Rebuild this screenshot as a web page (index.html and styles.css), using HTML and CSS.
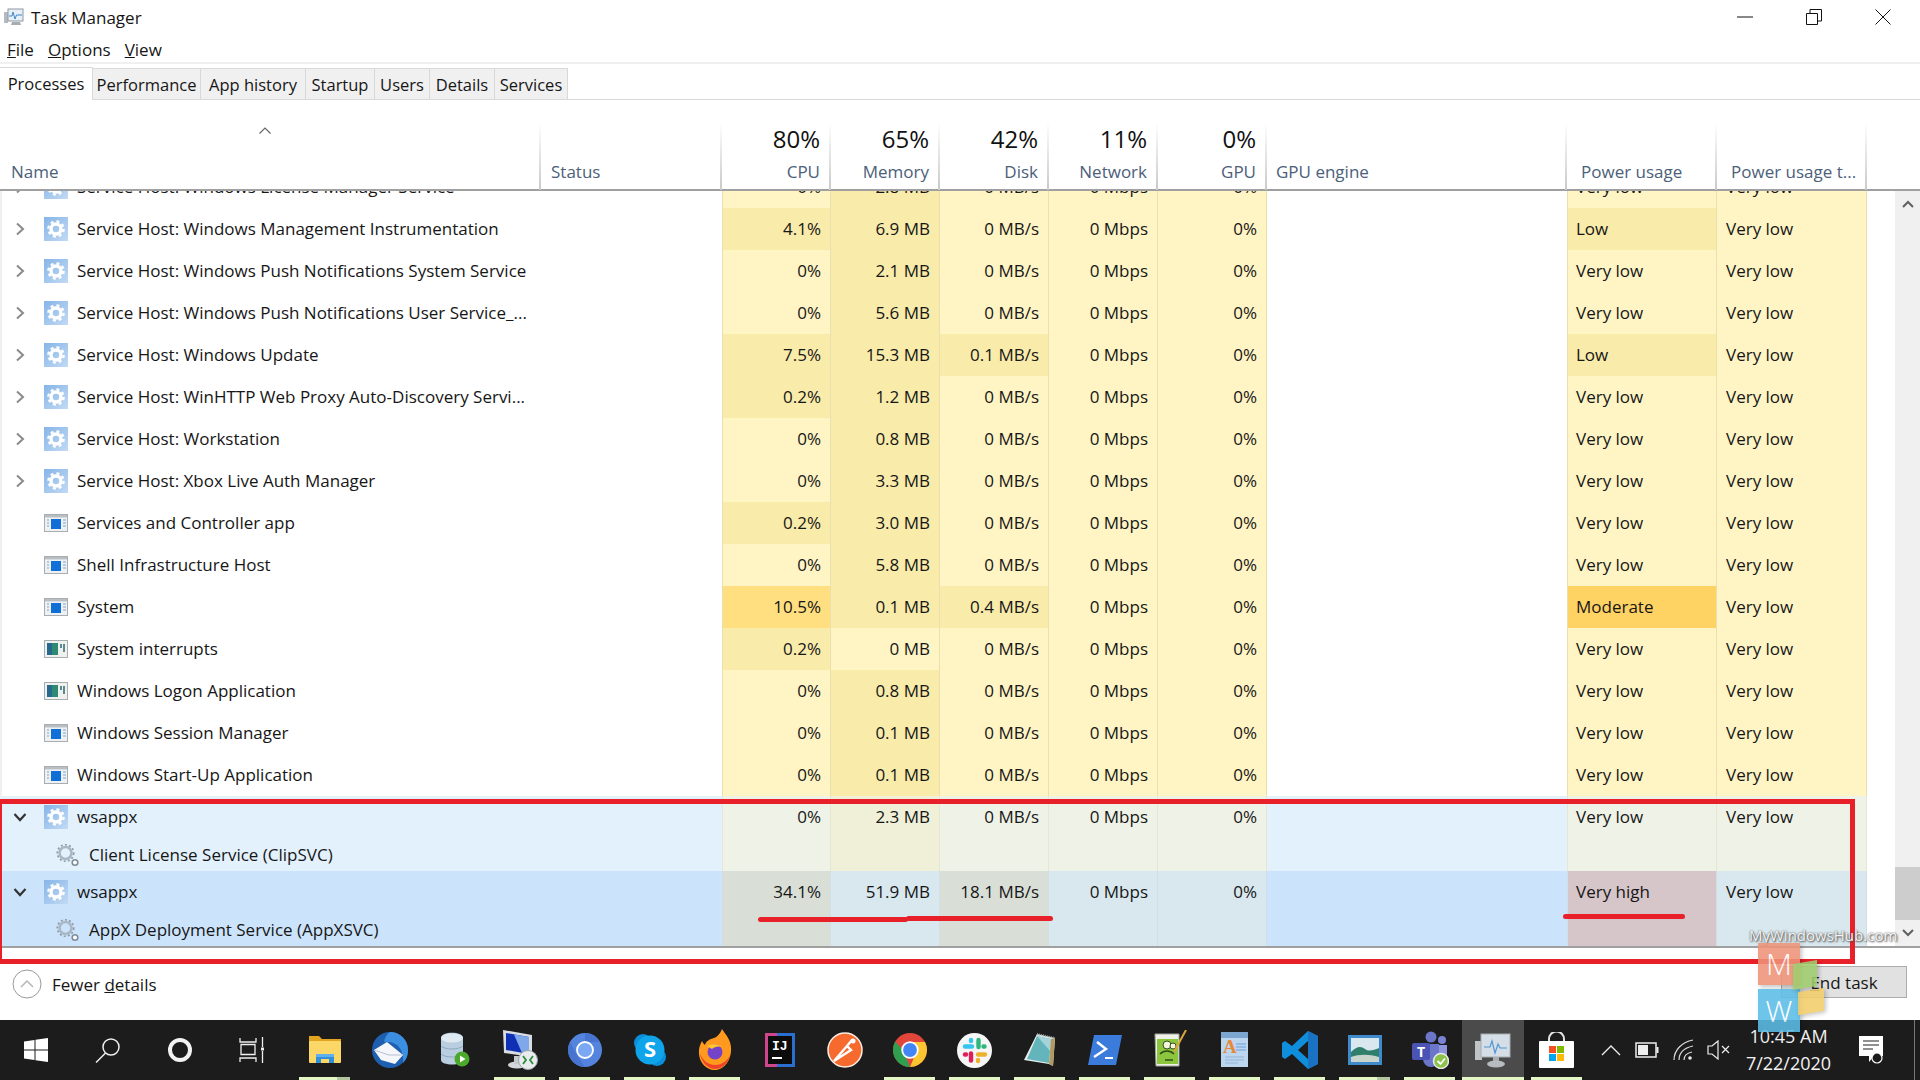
FILE: index.html
```html
<!DOCTYPE html>
<html lang="en">
<head>
    <meta charset="UTF-8">
    <meta name="viewport" content="width=device-width, initial-scale=1.0">
    <title>Task Manager</title>
    <link rel="stylesheet" href="styles.css">
</head>
<body>
    <svg class="defs" width="0" height="0">
        <defs>
            <linearGradient id="gearBg" x1="0" y1="0" x2="1" y2="1">
                <stop offset="0" stop-color="#86b5e8"/>
                <stop offset="1" stop-color="#c2daf4"/>
            </linearGradient>
            <symbol id="gear" viewBox="0 0 24 24">
                <rect width="24" height="24" fill="url(#gearBg)"/>
                <circle cx="12" cy="12" r="5" fill="none" stroke="#fff" stroke-width="3.4"/>
                <circle cx="12" cy="12" r="7.6" fill="none" stroke="#fff" stroke-width="2.4" stroke-dasharray="3 3"/>
            </symbol>
            <symbol id="gears" viewBox="0 0 24 24">
                <circle cx="9.5" cy="10" r="6" fill="none" stroke="#a9b8c4" stroke-width="2.6"/>
                <circle cx="9.5" cy="10" r="8.2" fill="none" stroke="#8d9aa6" stroke-width="1.6" stroke-dasharray="2 2.2"/>
                <circle cx="19" cy="19.5" r="2.8" fill="#fff" stroke="#7f8c98" stroke-width="1.6"/>
            </symbol>
            <symbol id="app" viewBox="0 0 24 18">
                <rect x=".5" y=".5" width="23" height="17" fill="#eef0f2" stroke="#a8adb2"/>
                <rect x="1" y="1" width="22" height="2.4" fill="#b9bec3"/>
                <rect x="7" y="5" width="10" height="10" fill="#0f6fd6"/>
                <path d="M3 6h2M3 9h2M3 12h2M19 6h3M19 9h3M19 12h3" stroke="#7fa6cc" stroke-width="1"/>
            </symbol>
            <symbol id="appg" viewBox="0 0 24 18">
                <rect x=".5" y=".5" width="23" height="17" fill="#eef1ee" stroke="#a8adb2"/>
                <rect x="3" y="3" width="11" height="12" fill="#2f8a73"/>
                <rect x="3" y="3" width="5" height="12" fill="#27688f"/>
                <path d="M17 4v4M20 4v8" stroke="#3a6f7a" stroke-width="1.6"/>
            </symbol>
            <symbol id="chevr" viewBox="0 0 10 14">
                <path d="M2 1.5 8 7l-6 5.500" fill="none" stroke="#8a8a8a" stroke-width="2"/>
            </symbol>
            <symbol id="chevd" viewBox="0 0 14 10">
                <path d="M1.500 2 7 8l5.500-6" fill="none" stroke="#333" stroke-width="2.200"/>
            </symbol>
        </defs>
    </svg>

    <div class="titlebar">
        <svg class="title-icon" width="20" height="20" viewBox="0 0 20 20">
            <rect x="0" y="5" width="4" height="11" fill="#b5bac0"/>
            <rect x="4" y="2" width="15" height="12" fill="#e6eef6" stroke="#8f979f"/>
            <path d="M5 9h3l1-4 2 7 1.500-4H18" fill="none" stroke="#3f86c9" stroke-width="1"/>
            <path d="M8 15h8l1 3H7z" fill="#a6acb2"/>
        </svg>
        <span class="title-text">Task Manager</span>
        <div class="win-controls">
            <svg class="ctl-min" width="16" height="16" viewBox="0 0 16 16"><path d="M0 8h16" stroke="#111" stroke-width="1"/></svg>
            <svg class="ctl-max" width="16" height="16" viewBox="0 0 16 16"><path d="M.5 4.500h11v11H.5zM4 4.500V.5h11.500V12H11.500" fill="none" stroke="#111"/></svg>
            <svg class="ctl-close" width="16" height="16" viewBox="0 0 16 16"><path d="M.5.5l15 15M15.500.5l-15 15" stroke="#111"/></svg>
        </div>
    </div>

    <div class="menubar">
        <span><u>F</u>ile</span>
        <span><u>O</u>ptions</span>
        <span><u>V</u>iew</span>
    </div>

    <div class="tabs">
        <div class="tab active">Processes</div>
        <div class="tab t-perf">Performance</div>
        <div class="tab t-hist">App history</div>
        <div class="tab t-start">Startup</div>
        <div class="tab t-users">Users</div>
        <div class="tab t-det">Details</div>
        <div class="tab t-serv">Services</div>
    </div>

    <div class="table-head">
        <div class="hcell h-name">
            <svg class="sort-caret" width="12" height="7" viewBox="0 0 12 7"><path d="M.5 6.500 6 1l5.500 5.500" fill="none" stroke="#666" stroke-width="1.200"/></svg>
            <span class="hlabel">Name</span>
        </div>
        <div class="hcell h-left"><span class="hlabel">Status</span></div>
        <div class="hcell h-num"><span class="hpct">80%</span><span class="hlabel">CPU</span></div>
        <div class="hcell h-num"><span class="hpct">65%</span><span class="hlabel">Memory</span></div>
        <div class="hcell h-num"><span class="hpct">42%</span><span class="hlabel">Disk</span></div>
        <div class="hcell h-num"><span class="hpct">11%</span><span class="hlabel">Network</span></div>
        <div class="hcell h-num"><span class="hpct">0%</span><span class="hlabel">GPU</span></div>
        <div class="hcell h-left h-engine"><span class="hlabel">GPU engine</span></div>
        <div class="hcell h-left h-power"><span class="hlabel">Power usage</span></div>
        <div class="hcell h-left h-power"><span class="hlabel">Power usage t...</span></div>
    </div>

    <div class="list">
        <div class="rows">
            <div class="row">
                <div class="name"><svg class="chev"><use href="#chevr"/></svg><svg class="icon"><use href="#gear"/></svg><span>Service Host: Windows License Manager Service</span></div>
                <div></div>
                <div class="c first">0%</div><div class="c m1">2.8 MB</div><div class="c">0 MB/s</div><div class="c">0 Mbps</div><div class="c">0%</div>
                <div></div>
                <div class="c p first">Very low</div><div class="c p">Very low</div>
            </div>
            <div class="row">
                <div class="name"><svg class="chev"><use href="#chevr"/></svg><svg class="icon"><use href="#gear"/></svg><span>Service Host: Windows Management Instrumentation</span></div>
                <div></div>
                <div class="c first m1">4.1%</div><div class="c m1">6.9 MB</div><div class="c">0 MB/s</div><div class="c">0 Mbps</div><div class="c">0%</div>
                <div></div>
                <div class="c p first m1">Low</div><div class="c p">Very low</div>
            </div>
            <div class="row">
                <div class="name"><svg class="chev"><use href="#chevr"/></svg><svg class="icon"><use href="#gear"/></svg><span>Service Host: Windows Push Notifications System Service</span></div>
                <div></div>
                <div class="c first">0%</div><div class="c m1">2.1 MB</div><div class="c">0 MB/s</div><div class="c">0 Mbps</div><div class="c">0%</div>
                <div></div>
                <div class="c p first">Very low</div><div class="c p">Very low</div>
            </div>
            <div class="row">
                <div class="name"><svg class="chev"><use href="#chevr"/></svg><svg class="icon"><use href="#gear"/></svg><span>Service Host: Windows Push Notifications User Service_...</span></div>
                <div></div>
                <div class="c first">0%</div><div class="c m1">5.6 MB</div><div class="c">0 MB/s</div><div class="c">0 Mbps</div><div class="c">0%</div>
                <div></div>
                <div class="c p first">Very low</div><div class="c p">Very low</div>
            </div>
            <div class="row">
                <div class="name"><svg class="chev"><use href="#chevr"/></svg><svg class="icon"><use href="#gear"/></svg><span>Service Host: Windows Update</span></div>
                <div></div>
                <div class="c first m1">7.5%</div><div class="c m1">15.3 MB</div><div class="c m1">0.1 MB/s</div><div class="c">0 Mbps</div><div class="c">0%</div>
                <div></div>
                <div class="c p first m1">Low</div><div class="c p">Very low</div>
            </div>
            <div class="row">
                <div class="name"><svg class="chev"><use href="#chevr"/></svg><svg class="icon"><use href="#gear"/></svg><span>Service Host: WinHTTP Web Proxy Auto-Discovery Servi...</span></div>
                <div></div>
                <div class="c first m1">0.2%</div><div class="c m1">1.2 MB</div><div class="c">0 MB/s</div><div class="c">0 Mbps</div><div class="c">0%</div>
                <div></div>
                <div class="c p first">Very low</div><div class="c p">Very low</div>
            </div>
            <div class="row">
                <div class="name"><svg class="chev"><use href="#chevr"/></svg><svg class="icon"><use href="#gear"/></svg><span>Service Host: Workstation</span></div>
                <div></div>
                <div class="c first">0%</div><div class="c m1">0.8 MB</div><div class="c">0 MB/s</div><div class="c">0 Mbps</div><div class="c">0%</div>
                <div></div>
                <div class="c p first">Very low</div><div class="c p">Very low</div>
            </div>
            <div class="row">
                <div class="name"><svg class="chev"><use href="#chevr"/></svg><svg class="icon"><use href="#gear"/></svg><span>Service Host: Xbox Live Auth Manager</span></div>
                <div></div>
                <div class="c first">0%</div><div class="c m1">3.3 MB</div><div class="c">0 MB/s</div><div class="c">0 Mbps</div><div class="c">0%</div>
                <div></div>
                <div class="c p first">Very low</div><div class="c p">Very low</div>
            </div>
            <div class="row">
                <div class="name nochev"><svg class="icon app"><use href="#app"/></svg><span>Services and Controller app</span></div>
                <div></div>
                <div class="c first m1">0.2%</div><div class="c m1">3.0 MB</div><div class="c">0 MB/s</div><div class="c">0 Mbps</div><div class="c">0%</div>
                <div></div>
                <div class="c p first">Very low</div><div class="c p">Very low</div>
            </div>
            <div class="row">
                <div class="name nochev"><svg class="icon app"><use href="#app"/></svg><span>Shell Infrastructure Host</span></div>
                <div></div>
                <div class="c first">0%</div><div class="c m1">5.8 MB</div><div class="c">0 MB/s</div><div class="c">0 Mbps</div><div class="c">0%</div>
                <div></div>
                <div class="c p first">Very low</div><div class="c p">Very low</div>
            </div>
            <div class="row">
                <div class="name nochev"><svg class="icon app"><use href="#app"/></svg><span>System</span></div>
                <div></div>
                <div class="c first hot">10.5%</div><div class="c m1">0.1 MB</div><div class="c m1">0.4 MB/s</div><div class="c">0 Mbps</div><div class="c">0%</div>
                <div></div>
                <div class="c p first mod">Moderate</div><div class="c p">Very low</div>
            </div>
            <div class="row">
                <div class="name nochev"><svg class="icon app"><use href="#appg"/></svg><span>System interrupts</span></div>
                <div></div>
                <div class="c first m1">0.2%</div><div class="c">0 MB</div><div class="c">0 MB/s</div><div class="c">0 Mbps</div><div class="c">0%</div>
                <div></div>
                <div class="c p first">Very low</div><div class="c p">Very low</div>
            </div>
            <div class="row">
                <div class="name nochev"><svg class="icon app"><use href="#appg"/></svg><span>Windows Logon Application</span></div>
                <div></div>
                <div class="c first">0%</div><div class="c m1">0.8 MB</div><div class="c">0 MB/s</div><div class="c">0 Mbps</div><div class="c">0%</div>
                <div></div>
                <div class="c p first">Very low</div><div class="c p">Very low</div>
            </div>
            <div class="row">
                <div class="name nochev"><svg class="icon app"><use href="#app"/></svg><span>Windows Session Manager</span></div>
                <div></div>
                <div class="c first">0%</div><div class="c m1">0.1 MB</div><div class="c">0 MB/s</div><div class="c">0 Mbps</div><div class="c">0%</div>
                <div></div>
                <div class="c p first">Very low</div><div class="c p">Very low</div>
            </div>
            <div class="row">
                <div class="name nochev"><svg class="icon app"><use href="#app"/></svg><span>Windows Start-Up Application</span></div>
                <div></div>
                <div class="c first">0%</div><div class="c m1">0.1 MB</div><div class="c">0 MB/s</div><div class="c">0 Mbps</div><div class="c">0%</div>
                <div></div>
                <div class="c p first">Very low</div><div class="c p">Very low</div>
            </div>

            <div class="row group g1">
                <div class="name-stack">
                    <div class="name"><svg class="chev down"><use href="#chevd"/></svg><svg class="icon"><use href="#gear"/></svg><span>wsappx</span></div>
                    <div class="child"><svg class="icon"><use href="#gears"/></svg><span>Client License Service (ClipSVC)</span></div>
                </div>
                <div></div>
                <div class="c first">0%</div><div class="c m1">2.3 MB</div><div class="c">0 MB/s</div><div class="c">0 Mbps</div><div class="c">0%</div>
                <div></div>
                <div class="c p first">Very low</div><div class="c p">Very low</div>
            </div>
            <div class="row group g2">
                <div class="name-stack">
                    <div class="name"><svg class="chev down"><use href="#chevd"/></svg><svg class="icon"><use href="#gear"/></svg><span>wsappx</span></div>
                    <div class="child"><svg class="icon"><use href="#gears"/></svg><span>AppX Deployment Service (AppXSVC)</span></div>
                </div>
                <div></div>
                <div class="c first m1">34.1%</div><div class="c">51.9 MB</div><div class="c m1">18.1 MB/s</div><div class="c">0 Mbps</div><div class="c">0%</div>
                <div></div>
                <div class="c p first vhigh">Very high</div><div class="c p">Very low</div>
            </div>
        </div>

        <div class="scrollbar">
            <div class="sb-btn"><svg width="12" height="8" viewBox="0 0 12 8"><path d="M1 7l5-5 5 5" fill="none" stroke="#606060" stroke-width="2"/></svg></div>
            <div class="sb-track"></div>
            <div class="sb-thumb"></div>
            <div class="sb-btn"><svg width="12" height="8" viewBox="0 0 12 8"><path d="M1 1l5 5 5-5" fill="none" stroke="#606060" stroke-width="2"/></svg></div>
        </div>
    </div>

    <div class="footer">
        <div class="fewer">
            <svg width="30" height="30" viewBox="0 0 30 30"><circle cx="15" cy="15" r="14" fill="none" stroke="#9a9a9a"/><path d="M9 18l6-6 6 6" fill="none" stroke="#b5b5b5" stroke-width="1.500"/></svg>
            <span>Fewer <u>d</u>etails</span>
        </div>
        <div class="end-task"><u>E</u>nd task</div>
    </div>

    <div class="taskbar">
        <div class="tb-btn">
            <svg width="24" height="24" viewBox="0 0 24 24"><path d="M0 3.500 10.500 2v9.500H0zM11.500 1.800 24 0v11.500H11.500zM0 12.500h10.500V22L0 20.500zM11.500 12.500H24V24l-12.500-1.800z" fill="#fff"/></svg>
        </div>
        <div class="tb-btn">
            <svg width="26" height="26" viewBox="0 0 26 26"><circle cx="16" cy="10" r="8" fill="none" stroke="#eee" stroke-width="1.500"/><path d="M10.500 16 1 25.500" stroke="#eee" stroke-width="1.500"/></svg>
        </div>
        <div class="tb-btn">
            <svg width="26" height="26" viewBox="0 0 26 26"><circle cx="13" cy="13" r="10" fill="none" stroke="#f2f2f2" stroke-width="4"/></svg>
        </div>
        <div class="tb-btn">
            <svg width="26" height="26" viewBox="0 0 26 26"><g fill="none" stroke="#eee" stroke-width="1.300"><path d="M1 1v4h16V1M1 25v-4h16v4M2 7.500h14v10H2zM23.500 0v10M23.500 14v12"/></g><rect x="22" y="10.500" width="3" height="3" fill="#eee"/></svg>
        </div>

        <div class="app-slots">
            <div class="slot on stacked">
                <svg width="34" height="30" viewBox="0 0 34 30"><path d="M1 1h10l3 3h19v6H1z" fill="#e3a51f"/><rect x="1" y="6" width="32" height="22" rx="1" fill="#fad767"/><path d="M8 28V19h18v9h-5v-4h-8v4z" fill="#2f8fdc"/><rect x="8" y="19" width="18" height="3" fill="#5fb0ec"/></svg>
            </div>
            <div class="slot">
                <svg width="38" height="42" viewBox="0 0 38 42"><circle cx="19" cy="21" r="18" fill="#1f5fb0"/><path d="M19 3a18 18 0 0 1 18 18c0 6-2 10-5 13 1-6-1-14-6-18-4-3-9-4-13-3 1-5 3-8 6-10z" fill="#3c8fe0"/><path d="M3 21l13-8 16 13-8 9-14-4z" fill="#f4f6fa"/><path d="M3 21l15 5 14 0" fill="none" stroke="#b7c1d0"/></svg>
            </div>
            <div class="slot">
                <svg width="30" height="36" viewBox="0 0 30 36"><path d="M1 6c0-7 22-7 22 0v22c0 6-22 6-22 0z" fill="#b9cee0"/><ellipse cx="12" cy="6" rx="11" ry="4.500" fill="#dfe9f2"/><path d="M1 14c4 4 18 4 22 0M1 22c4 4 18 4 22 0" fill="none" stroke="#8ea9c2"/><circle cx="22" cy="27" r="7.500" fill="#4aa82a"/><path d="M20 23.500v7l5.500-3.500z" fill="#fff"/></svg>
            </div>
            <div class="slot on">
                <svg width="36" height="42" viewBox="0 0 36 42"><path d="M1 1 30 6v22L2 24z" fill="#d8dde2"/><path d="M4 4 27 8v17L4 21z" fill="#0f2fb4"/><path d="M12 5.400 27 8v17l-7-1z" fill="#7ea8ea"/><ellipse cx="15" cy="36" rx="9" ry="3.500" fill="#d4d8dc"/><rect x="12" y="27" width="6" height="8" fill="#c5cace"/><circle cx="26" cy="31" r="9.500" fill="#e8ecec" stroke="#9da4a8"/><path d="M21 27l3 4-3 4M31 27l-3 4 3 4" fill="none" stroke="#2e8b3c" stroke-width="1.800"/></svg>
            </div>
            <div class="slot on">
                <svg width="34" height="34" viewBox="0 0 34 34"><circle cx="17" cy="17" r="17" fill="#5584df"/><path d="M17 0a17 17 0 0 1 15 9H17zM2 9 10 24 17 34A17 17 0 0 1 2 9z" fill="#4674cf"/><circle cx="17" cy="17" r="8" fill="#7ba8f2" stroke="#fff" stroke-width="1.800"/></svg>
            </div>
            <div class="slot on">
                <svg width="32" height="32" viewBox="0 0 32 32"><circle cx="9" cy="9" r="9" fill="#0b8fdb"/><circle cx="23" cy="23" r="9" fill="#0b8fdb"/><circle cx="16" cy="16" r="14.500" fill="#10a5ea"/><text x="16" y="23" class="icon-s">S</text></svg>
            </div>
            <div class="slot on">
                <svg width="34" height="42" viewBox="0 0 34 42"><path d="M24 0c3 5 8 9 9 18 1 13-7 23-16 23S0 33 1 21c.3-4 2-7 3-9 1 2 2 3 3 4 1-4 5-6 9-7 3-1 6-4 8-9z" fill="#ff9a1f"/><path d="M2 24c1 9 8 16 15 16s14-6 15-15c-1 6-8 11-15 11S4 31 2 24z" fill="#f0432c"/><circle cx="17" cy="23" r="7.500" fill="#7543c8"/><path d="M9 17c4-2 10-3 15 1-4-1-8 0-10 2z" fill="#ffc52e"/></svg>
            </div>
            <div class="slot">
                <svg width="30" height="34" viewBox="0 0 30 34"><rect width="30" height="34" fill="#2a6fd0"/><path d="M0 0h12v3H3v28h9v3H0z" fill="#d0458c"/><rect x="3" y="3" width="24" height="28" fill="#0c0c0c"/><text x="7" y="17" class="icon-ij">IJ</text><rect x="7" y="24" width="10" height="2" fill="#fff"/></svg>
            </div>
            <div class="slot">
                <svg width="36" height="36" viewBox="0 0 36 36"><circle cx="18" cy="18" r="17" fill="#f76a2e" stroke="#fdeee6" stroke-width="1.500"/><path d="M7 29 20 14l4 4zM20 14l5-6" stroke="#fff" stroke-width="2.400" fill="none"/><circle cx="26" cy="9" r="2.500" fill="#fff"/></svg>
            </div>
            <div class="slot on">
                <svg width="34" height="34" viewBox="0 0 34 34"><circle cx="17" cy="17" r="17" fill="#e2463a"/><path d="M17 34A17 17 0 0 1 2.300 8.500L10 17l7 17z" fill="#2f9e4f"/><path d="M17 34A17 17 0 0 0 32 9H17l5 13z" fill="#fbc62f"/><circle cx="17" cy="17" r="7.800" fill="#4285f4" stroke="#fff" stroke-width="1.800"/></svg>
            </div>
            <div class="slot on">
                <svg width="35" height="35" viewBox="0 0 35 35"><circle cx="17.500" cy="17.500" r="17.500" fill="#f6f6f6"/><g stroke-width="4.400" stroke-linecap="round"><path d="M8 13.500h7" stroke="#36c5f0"/><path d="M14 7v1" stroke="#36c5f0"/><path d="M21.500 7v7" stroke="#2eb67d"/><path d="M27.500 13.500h-1" stroke="#2eb67d"/><path d="M21 21.500h7" stroke="#ecb22e"/><path d="M21 28v-1" stroke="#ecb22e"/><path d="M14 20.500v7" stroke="#e01e5a"/><path d="M8 21.500h1" stroke="#e01e5a"/></g></svg>
            </div>
            <div class="slot on">
                <svg width="34" height="34" viewBox="0 0 34 34"><path d="M14 1 32 5l-2 28-4-2L1 27z" fill="#e6efef"/><path d="M14 3 28 6l-2 24L4 26z" fill="#64b4bc"/><path d="M14 3 28 6l-1 12z" fill="#a4d4d8"/><path d="M28 6l4-1-2 28-4-2z" fill="#b09a62"/><path d="M14 1 32 5" stroke="#9aa0a0" stroke-width="2" stroke-dasharray="1 1"/></svg>
            </div>
            <div class="slot on">
                <svg width="34" height="30" viewBox="0 0 34 30"><path d="M6 0h28l-6 30H0z" fill="#3a7bdc"/><path d="M9 7l9 7-12 8" fill="none" stroke="#fff" stroke-width="2.400"/><path d="M17 23h8" stroke="#fff" stroke-width="2"/></svg>
            </div>
            <div class="slot on">
                <svg width="34" height="40" viewBox="0 0 34 40"><path d="M2 4h24v32H3z" fill="#f0f2ea" stroke="#9fa59b"/><rect x="4" y="9" width="21" height="25" fill="#8cc63f"/><circle cx="14" cy="15" r="4" fill="#f4f4dc" stroke="#33511a"/><circle cx="20" cy="16" r="3" fill="#f4f4dc" stroke="#33511a"/><path d="M7 24c4-4 10-4 14 0M12 30h8" fill="none" stroke="#2e4d18" stroke-width="1.600"/><path d="M33 0 21 22" stroke="#d8a83c" stroke-width="2"/></svg>
            </div>
            <div class="slot on">
                <svg width="30" height="38" viewBox="0 0 30 38"><rect x="1" y="1" width="27" height="35" fill="#bcd6f0"/><rect x="1" y="1" width="27" height="6" fill="#7ca6d0"/><text x="3" y="22" class="icon-a">A</text><path d="M16 13h10M16 16h10M16 19h10" stroke="#6c9ed2" stroke-width="1.200"/><path d="M5 26h19M5 29h19M5 32h13" stroke="#93b4d4"/></svg>
            </div>
            <div class="slot on">
                <svg width="36" height="38" viewBox="0 0 36 38"><path d="M26 0 36 5v28l-10 5L10 23 3 28 0 26V12l3-2 7 5zM26 10l-10 9 10 9z" fill="#0f8edc"/><path d="M26 0 36 5v28l-10 5z" fill="#1a73c2"/></svg>
            </div>
            <div class="slot on stacked">
                <svg width="34" height="30" viewBox="0 0 34 30"><rect width="34" height="30" fill="#3f8acb"/><rect x="3" y="3" width="28" height="24" fill="#d8e8ee"/><path d="M3 17c6-6 10-6 14-3s9 1 14-1v14H3z" fill="#2f7f6c"/><path d="M3 22c8-3 18-3 28 0v5H3z" fill="#c7d5cd"/></svg>
            </div>
            <div class="slot on">
                <svg width="38" height="38" viewBox="0 0 38 38"><circle cx="20" cy="6" r="5.500" fill="#6b75c9"/><circle cx="31" cy="9" r="4" fill="#7b83d4"/><path d="M12 13h16v15a8 8 0 0 1-16 0z" fill="#6b75c9"/><path d="M28 14h8v11a5 5 0 0 1-8 3z" fill="#8d95dc"/><rect x="1" y="12" width="18" height="17" rx="2" fill="#4b53b4"/><text x="10" y="26" class="icon-t">T</text><circle cx="30" cy="30" r="7.500" fill="#8bc34a" stroke="#e9e9e9" stroke-width="1.500"/><path d="M26.500 30l3 3 4.500-5.500" fill="none" stroke="#fff" stroke-width="1.800"/></svg>
            </div>
            <div class="slot on active">
                <svg width="36" height="38" viewBox="0 0 36 38"><rect x="0" y="10" width="7" height="19" fill="#bfc4c8"/><rect x="6" y="3" width="29" height="23" fill="#d5dee6" stroke="#a7adb3"/><path d="M9 16h6l2-6 3 12 3-9 2 4h7" fill="none" stroke="#4f97d4" stroke-width="1.200"/><rect x="18" y="26" width="6" height="5" fill="#a9aeb2"/><ellipse cx="21" cy="33" rx="9" ry="3.500" fill="#b8bcc0"/></svg>
            </div>
            <div class="slot on">
                <svg width="35" height="36" viewBox="0 0 35 36"><path d="M10 10V7a7.500 7.500 0 0 1 15 0v3" fill="none" stroke="#e4e4e4" stroke-width="2"/><rect y="9" width="35" height="27" rx="1" fill="#fff"/><rect x="10" y="14" width="7" height="7" fill="#f25022"/><rect x="18" y="14" width="7" height="7" fill="#7fba00"/><rect x="10" y="22" width="7" height="7" fill="#00a4ef"/><rect x="18" y="22" width="7" height="7" fill="#ffb900"/></svg>
            </div>
        </div>

        <div class="tray">
            <div class="tray-item t-chev"><svg width="20" height="12" viewBox="0 0 20 12"><path d="M1 11l9-9 9 9" fill="none" stroke="#eee" stroke-width="1.300"/></svg></div>
            <div class="tray-item t-batt"><svg width="24" height="16" viewBox="0 0 24 16"><rect x="1" y="1" width="20" height="14" fill="none" stroke="#eee" stroke-width="1.500"/><rect x="3" y="3" width="10" height="10" fill="#eee"/><rect x="21.500" y="5" width="2" height="6" fill="#eee"/></svg></div>
            <div class="tray-item t-wifi"><svg width="22" height="22" viewBox="0 0 22 22"><g fill="none" stroke="#ddd" stroke-width="1.200"><path d="M1 21C1 11 9 3 20 1"/><path d="M6 21c0-7 5-12 14-14"/><path d="M11 21c0-4 3-7 8-8"/></g><circle cx="17" cy="19" r="1.800" fill="#eee"/></svg></div>
            <div class="tray-item t-vol"><svg width="24" height="20" viewBox="0 0 24 20"><path d="M1 6h4l6-5v18l-6-5H1z" fill="none" stroke="#eee" stroke-width="1.200"/><path d="M15 6l7 7M22 6l-7 7" stroke="#eee" stroke-width="1.200"/></svg></div>
            <div class="clock"><span>10:45 AM</span><span>7/22/2020</span></div>
            <div class="tray-item t-note"><svg width="26" height="30" viewBox="0 0 26 30"><path d="M1 1h24v20h-9l-5 6v-6H1z" fill="#fff"/><path d="M5 6h16M5 10h16M5 14h10" stroke="#222" stroke-width="1.200"/><circle cx="19" cy="23" r="5" fill="#1c1c1c" stroke="#fff" stroke-width="1.200"/></svg></div>
            <div class="show-desktop"></div>
        </div>
    </div>

    <!-- annotations drawn over the screenshot -->
    <div class="red-box"></div>
    <div class="red-line rl-1"></div>
    <div class="red-line rl-2"></div>
    <div class="red-line rl-3"></div>

    <div class="wm-text">MyWindowsHub.com</div>
    <div class="wm-tile wm-m">M</div>
    <div class="wm-tile wm-w">W</div>
    <div class="wm-tile wm-green"></div>
    <div class="wm-tile wm-yellow"></div>
</body>
</html>
```

FILE: styles.css
```css
* {
    margin: 0;
    padding: 0;
    box-sizing: border-box;
}

body {
    font-family: 'Open Sans', 'Noto Sans', sans-serif;
    font-size: 17px;
    background: white;
    color: #161616;
    width: 1920px;
    height: 1080px;
    overflow: hidden;
    position: relative;
}

.defs {
    position: absolute;
}

.titlebar {
    height: 38px;
    display: flex;
    align-items: center;
    padding: 0 0 4px 4px;
}

.title-icon {
    margin-right: 7px;
}

.win-controls {
    margin-left: auto;
    display: flex;
    align-items: center;
    padding-right: 29px;
    gap: 53px;
}

.menubar {
    height: 25px;
    display: flex;
    align-items: center;
    gap: 14px;
    padding: 0 0 2px 7px;
    border-bottom: 1px solid #f0f0f0;
}

.tabs {
    height: 37px;
    display: flex;
    align-items: flex-end;
    font-size: 16.500px;
    border-bottom: 1px solid #d9d9d9;
    border-top: 1px solid #f0f0f0;
}

.tab {
    height: 31px;
    line-height: 32px;
    text-align: center;
    background: #f0f0f0;
    border: 1px solid #d9d9d9;
    border-left: none;
    border-bottom: none;
}

.tab.active {
    width: 93px;
    height: 33px;
    line-height: 31px;
    background: white;
    margin-bottom: -1px;
    padding-bottom: 1px;
}

.t-perf { width: 108px; }
.t-hist { width: 105px; }
.t-start { width: 69px; }
.t-users { width: 55px; }
.t-det { width: 65px; }
.t-serv { width: 73px; }

.table-head,
.row {
    display: grid;
    grid-template-columns: 539px 181px 109px 109px 109px 109px 109px 300px 150px 150px;
}

.table-head {
    height: 91px;
    padding: 23px 0 0 2px;
    border-bottom: 2px solid #a0a0a0;
}

.hcell {
    position: relative;
    display: flex;
    flex-direction: column;
    justify-content: flex-end;
    border-right: 2px solid;
    border-image: linear-gradient(#fff, #c8c8c8) 1;
    padding-bottom: 7px;
}

.h-name {
    padding-left: 9px;
}

.sort-caret {
    position: absolute;
    top: 4px;
    left: 257px;
}

.h-left {
    padding-left: 10px;
}

.h-engine {
    padding-left: 9px;
}

.h-power {
    padding-left: 14px;
}

.h-num {
    text-align: right;
    padding-right: 9px;
}

.hpct {
    font-size: 24px;
    line-height: 32px;
    margin-bottom: 6px;
    color: #111;
}

.hlabel {
    line-height: 22px;
    color: #4c607a;
}

.list {
    height: 757px;
    display: flex;
    overflow: hidden;
    border-left: 2px solid #f0f0f0;
    border-bottom: 2px solid #a0a0a0;
}

.rows {
    width: 1864px;
    margin-top: -25px;
    flex-shrink: 0;
}

.row {
    height: 42px;
    line-height: 41px;
}

.name {
    display: flex;
    align-items: center;
    height: 42px;
    white-space: nowrap;
}

.name span {
    margin-top: -2px;
}

.child span {
    margin-top: -1px;
}

.chev {
    width: 10px;
    height: 14px;
    margin: 0 19px 0 13px;
    flex-shrink: 0;
}

.chev.down {
    width: 14px;
    height: 10px;
    margin: 0 17px 0 11px;
}

.icon {
    width: 24px;
    height: 24px;
    flex-shrink: 0;
    margin-right: 9px;
}

.nochev {
    padding-left: 42px;
}

.icon.app {
    height: 18px;
}

.c {
    text-align: right;
    padding-right: 9px;
    background: #fff4c4;
    border-right: 1px solid #eadfae;
}

.c.first {
    border-left: 1px solid #eadfae;
}

.c.p {
    text-align: left;
    padding: 0 0 0 9px;
}

.c.p.first {
    padding-left: 8px;
}

.c.m1 {
    background: #f9ebaa;
}

.c.hot {
    background: #ffdf80;
}

.c.mod {
    background: #ffd264;
}

.group {
    height: 75px;
}

.child {
    display: flex;
    align-items: center;
    height: 33px;
    padding-left: 54px;
    white-space: nowrap;
}

.g1 {
    background: #e3f1fd;
}

.g1 .c {
    background: #eff2e6;
    border-color: #e6e6d2;
}

.g1 .c.m1 {
    background: #eff0d7;
}

.g2 {
    background: #cce4fb;
}

.g2 .c {
    background: #d8e8ee;
    border-color: #cfdfe4;
}

.g2 .c.m1 {
    background: #d9dfd6;
}

.g2 .c.vhigh {
    background: #d6c5c9;
}

.scrollbar {
    width: 25px;
    margin-left: 29px;
    display: flex;
    flex-direction: column;
    background: #f0f0f0;
}

.sb-btn {
    height: 26px;
    display: flex;
    align-items: center;
    justify-content: center;
    flex-shrink: 0;
}

.sb-track {
    flex: 1;
}

.sb-thumb {
    height: 53px;
    background: #cdcdcd;
}

.footer {
    height: 72px;
    display: flex;
    align-items: center;
    justify-content: space-between;
    padding: 0 13px 0 12px;
}

.fewer {
    display: flex;
    align-items: center;
    gap: 10px;
}

.end-task {
    width: 126px;
    height: 32px;
    line-height: 32px;
    text-align: center;
    background: #e1e1e1;
    border: 1px solid #adadad;
    margin-top: -4px;
}

.taskbar {
    height: 60px;
    background: #1c1c1c;
    display: flex;
    align-items: stretch;
}

.tb-btn {
    width: 72px;
    display: flex;
    align-items: center;
    justify-content: center;
}

.app-slots {
    display: flex;
    margin-left: 4px;
}

.slot {
    width: 65px;
    display: flex;
    align-items: center;
    justify-content: center;
}

.slot.on {
    background: linear-gradient(#e3f6c6, #e3f6c6) center bottom / 51px 3px no-repeat;
}

.slot.stacked {
    background: linear-gradient(90deg, #e3f6c6 38px, #b4c6a0 38px) center bottom / 51px 3px no-repeat;
}

.slot.active {
    width: 62px;
    background: linear-gradient(#e3f6c6, #e3f6c6) center bottom / 62px 3px no-repeat, #4b4b4b;
}

.tray {
    display: flex;
    align-items: center;
    margin-left: 4px;
    flex: 1;
}

.tray-item {
    display: flex;
    justify-content: center;
    align-items: center;
}

.t-chev { width: 36px; }
.t-batt { width: 36px; }
.t-wifi { width: 37px; }
.t-vol { width: 34px; }
.t-note { width: 60px; }

.clock {
    width: 105px;
    display: flex;
    flex-direction: column;
    align-items: center;
    color: #f2f2f2;
    font-size: 18px;
    line-height: 27px;
}

.show-desktop {
    height: 60px;
    width: 1px;
    margin-left: 13px;
    background: #777;
}

.icon-s {
    font: bold 22px 'Open Sans', sans-serif;
    fill: #fff;
    text-anchor: middle;
}

.icon-ij {
    font: bold 13px 'Liberation Mono', monospace;
    fill: #fff;
}

.icon-a {
    font: bold 19px 'Liberation Serif', serif;
    fill: #e8893a;
}

.icon-t {
    font: bold 14px 'Open Sans', sans-serif;
    fill: #fff;
    text-anchor: middle;
}

/* red marks and watermark sit on top of everything */
.red-box {
    position: absolute;
    left: 0;
    top: 799px;
    width: 1855px;
    height: 165px;
    border: 5px solid #e8202a;
    border-left-width: 2px;
}

.red-line {
    position: absolute;
    height: 5px;
    border-radius: 3px;
    background: #e8202a;
}

.rl-1 { left: 758px; top: 917px; width: 150px; }
.rl-2 { left: 906px; top: 916px; width: 147px; }
.rl-3 { left: 1563px; top: 914px; width: 122px; }

.wm-text {
    position: absolute;
    left: 1749px;
    top: 924px;
    font-size: 15px;
    line-height: 22px;
    color: #f4f4f4;
    text-shadow: 0 0 2px #555, 1px 1px 2px #555;
}

.wm-tile {
    position: absolute;
    color: white;
    font-size: 30px;
    font-weight: 300;
    text-align: center;
    opacity: 0.88;
    box-shadow: 2px 2px 4px rgba(0,0,0,0.25);
}

.wm-m {
    left: 1758px;
    top: 943px;
    width: 42px;
    height: 42px;
    line-height: 42px;
    background: #ee9478;
}

.wm-w {
    left: 1758px;
    top: 989px;
    width: 42px;
    height: 43px;
    line-height: 43px;
    background: #5cbde8;
}

.wm-green {
    left: 1793px;
    top: 962px;
    width: 24px;
    height: 26px;
    background: #a0cc6e;
    transform: skewY(-10deg);
}

.wm-yellow {
    left: 1798px;
    top: 990px;
    width: 26px;
    height: 23px;
    background: #f2cd6a;
    transform: skewY(-10deg);
}
```
